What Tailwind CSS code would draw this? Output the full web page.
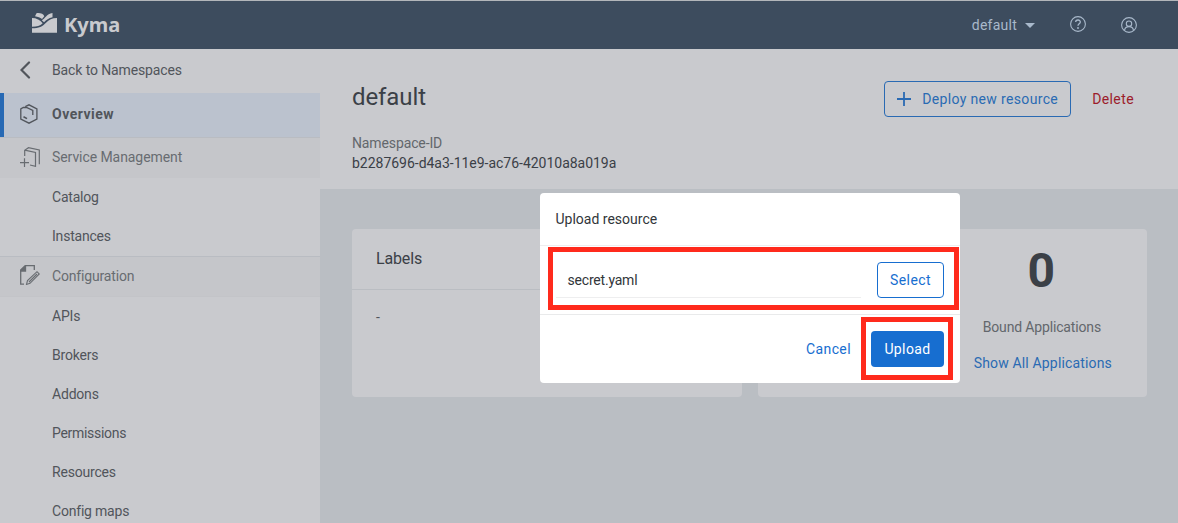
<!DOCTYPE html>
<html lang="en">
<head>
<meta charset="utf-8">
<title>Kyma</title>
<script src="https://cdn.jsdelivr.net/npm/@tailwindcss/browser@4"></script>
</head>
<body class="relative flex h-[523px] w-[1178px] flex-col overflow-hidden bg-[#babec3] font-['Roboto','Noto_Sans',sans-serif] text-sm text-[#51555b]">
  <header class="flex h-[49px] shrink-0 items-center border-t border-[#b3b6ba] bg-[#3d4c5e] pl-8 text-[#a9b9cb]">
    <svg class="-mt-1 h-5 w-[25px]" viewBox="0 0 25 20" fill="#c9cace">
      <path d="M3 3.200L4.500 .2C8 -.3 11.500 .8 12.300 3.200L10 6C8 4.600 6 3.700 3 3.200Z"/>
      <path d="M20.500 0V4.200C16.500 5.200 14.500 6.800 12 9.200L9.800 7.300C13 5.800 14.500 1 20.500 0Z"/>
      <path d="M0 5C4.500 5 8 7 10.700 10.200C8 12.800 5 13.600 0 13.700Z"/>
      <path d="M0 15.200C7 15.200 10.500 13.500 14 9.700C17 6.500 20 5.200 25 5V19.700H0Z"/>
    </svg>
    <span class="ml-[7px] font-['Noto_Sans',sans-serif] text-[20px] font-bold text-[#c9cace]">Kyma</span>
    <div class="ml-auto flex items-center pr-[41px]">
      <span class="text-sm tracking-[0.25px]">default</span>
      <svg class="ml-2 h-[5px] w-[10px]" viewBox="0 0 10 5" fill="#a9b9cb"><path d="M0 0H10L5 5Z"/></svg>
      <svg class="-mt-[2px] ml-[35px] size-4" viewBox="0 0 16 16" fill="none" stroke="#a9b9cb" stroke-width="1.100"><circle cx="8" cy="8" r="7.400"/><path d="M5.700 6.100C5.700 3.300 10.300 3.300 10.300 6C10.300 7.800 8 7.900 8 9.800" stroke-width="1.300"/><circle cx="8" cy="12" r=".4"/></svg>
      <svg class="ml-[35px] size-4" viewBox="0 0 16 16" fill="none" stroke="#a9b9cb" stroke-width="1.100"><circle cx="8" cy="8" r="7.400"/><circle cx="8" cy="6.700" r="2.700"/><path d="M3.500 13.300C3.900 11 5.400 9.600 8 9.600S12.100 11 12.500 13.300"/></svg>
    </div>
  </header>

  <div class="flex min-h-0 flex-1">
    <nav class="flex w-80 shrink-0 flex-col bg-[#c9cace] tracking-[-0.2px]">
      <a class="flex h-11 shrink-0 items-center pb-[2px] pl-5">
        <svg class="h-[18px] w-[11px]" viewBox="0 0 11 18" fill="none" stroke="#51555b" stroke-width="2.200" stroke-linecap="round"><path d="M9 1.500L1.500 9L9 16.500"/></svg>
        <span class="ml-[21px] tracking-[-0.12px]">Back to Namespaces</span>
      </a>
      <a class="flex h-11 shrink-0 items-center border-l-4 border-[#2769b4] bg-[#bbc2ce] pb-[2px] pl-4 font-bold">
        <svg class="-mt-px h-5 w-[18px]" viewBox="0 0 18 20" fill="none" stroke="#51555b" stroke-width="1.300"><path d="M5.300 2.700L9 .8L16.900 4.800V15.100L9 19.200L.8 15.100V4.800L3.300 3.500L6.500 3.500L12.800 6.300V11"/><path d="M3.500 12.800L7 14.600" stroke-width="1.600"/></svg>
        <span class="ml-[14px] tracking-[0.5px]">Overview</span>
      </a>
      <div class="flex h-[41px] shrink-0 items-center border-t border-[#b9bcc2] bg-[#c5c6ca] pb-[2px] pl-5 text-[#686c71]">
        <svg class="-mt-px h-5 w-5" viewBox="0 0 20 20" fill="none" stroke="#686c71" stroke-width="1.200"><path d="M4.700 9V3.200L8.500.7L19.300 3V17.200M4.700 3.200L15.500 5.500V19.300L10 18M0 15.700H9M4.500 11.200V20"/></svg>
        <span class="ml-3 tracking-[-0.07px]">Service Management</span>
      </div>
      <a class="flex h-[39px] shrink-0 items-center pb-[2px] pl-[52px]">Catalog</a>
      <a class="flex h-[39px] shrink-0 items-center pb-[2px] pl-[52px]">Instances</a>
      <div class="flex h-[41px] shrink-0 items-center border-y border-t-[#b9bcc2] border-b-[#c3c4c8] bg-[#c5c6ca] pb-[2px] pl-5 text-[#686c71]">
        <svg class="-mt-px h-5 w-5" viewBox="0 0 20 20" fill="none" stroke="#686c71" stroke-width="1.300"><path d="M4 19.200H.7V5.500L5.500.7H14.300V5"/><path d="M.7 6V5L5.500.5V6Z" fill="#686c71"/><path d="M6.500 19.400L7.500 15.500L17 6.700L19.300 9L10 18.300ZM9 17L17 9" stroke-width="1.100"/></svg>
        <span class="ml-3 tracking-[-0.17px]">Configuration</span>
      </div>
      <a class="flex h-[39px] shrink-0 items-center pb-[2px] pl-[52px]">APIs</a>
      <a class="flex h-[39px] shrink-0 items-center pb-[2px] pl-[52px]">Brokers</a>
      <a class="flex h-[39px] shrink-0 items-center pb-[2px] pl-[52px]">Addons</a>
      <a class="flex h-[39px] shrink-0 items-center pb-[2px] pl-[52px] tracking-[-0.3px]">Permissions</a>
      <a class="flex h-[39px] shrink-0 items-center pb-[2px] pl-[52px]">Resources</a>
      <a class="flex h-[39px] shrink-0 items-center pb-[2px] pl-[52px]">Config maps</a>
    </nav>

    <main class="min-w-0 flex-1">
      <section class="flex h-[140px] items-start justify-between bg-[#c9cace] pl-8 pr-[44px]">
        <div class="pt-8">
          <h1 class="text-2xl leading-8 tracking-[-0.1px] text-[#3b4047]">default</h1>
          <p class="mt-5 leading-5 tracking-[-0.12px] text-[#63676c]">Namespace-ID</p>
          <p class="leading-5 tracking-[-0.02px] text-[#3b4047]">b2287696-d4a3-11e9-ac76-42010a8a019a</p>
        </div>
        <div class="flex items-center pt-8">
          <button class="flex h-9 w-[187px] shrink-0 items-center rounded border border-[#2a6ab3] pl-3 text-[#2a6ab3]">
            <svg class="size-[14px]" viewBox="0 0 14 14" stroke="#2a6ab3" stroke-width="1.800"><path d="M0 7H14M7 0V14"/></svg>
            <span class="ml-[11px] whitespace-nowrap tracking-[0.35px]">Deploy new resource</span>
          </button>
          <span class="ml-[21px] tracking-[0.4px] text-[#9c1c2b]">Delete</span>
        </div>
      </section>
      <section class="flex gap-4 pl-8 pt-10">
        <div class="h-[168px] w-[390px] rounded bg-[#c9cace]">
          <h2 class="flex h-[61px] items-center border-b border-[#babdc2] pl-6 text-base tracking-[-0.15px] text-[#3b4047]">Labels</h2>
          <p class="pl-6 pt-[17px] leading-5">-</p>
        </div>
        <div class="flex h-[168px] w-[389px] justify-end rounded bg-[#c9cace] pr-[35px]">
          <div class="flex flex-col items-center">
            <strong class="mt-4 pr-[3px] text-5xl leading-[52px] text-[#3b4047]">0</strong>
            <span class="mt-5 pr-[2px] leading-5 tracking-[-0.15px] text-[#63676c]">Bound Applications</span>
            <a class="mt-4 leading-5 tracking-[0.16px] text-[#2a6ab3]">Show All Applications</a>
          </div>
        </div>
      </section>
    </main>
  </div>

  <div role="dialog" class="absolute left-[540px] top-[193px] flex h-[190px] w-[420px] flex-col rounded bg-white text-[#32363a]">
    <h3 class="flex h-[53px] items-center border-b border-[#eeeeef] pl-[15.500px] tracking-[0px]">Upload resource</h3>
    <div class="flex h-[69px] items-center justify-between border-b border-[#e9eaeb] px-4">
      <div class="flex h-9 w-[305px] items-center border-b border-[#eeeeef] pl-[11.500px] tracking-[-0.2px]">secret.yaml</div>
      <button class="h-9 w-[67px] rounded border border-[#176ed0] tracking-[0.4px] text-[#176ed0]">Select</button>
    </div>
    <div class="flex flex-1 items-center justify-end pr-4">
      <button class="tracking-[0.4px] text-[#176ed0]">Cancel</button>
      <button class="ml-5 h-9 w-[73px] rounded bg-[#176ed0] tracking-[0.4px] text-white">Upload</button>
    </div>
  </div>
  <div class="absolute left-[548px] top-[247px] h-[63px] w-[411px] border-5 border-[#ff2a1c]"></div>
  <div class="absolute left-[861px] top-[317px] h-[63px] w-[92px] border-5 border-[#ff2a1c]"></div>
</body>
</html>
